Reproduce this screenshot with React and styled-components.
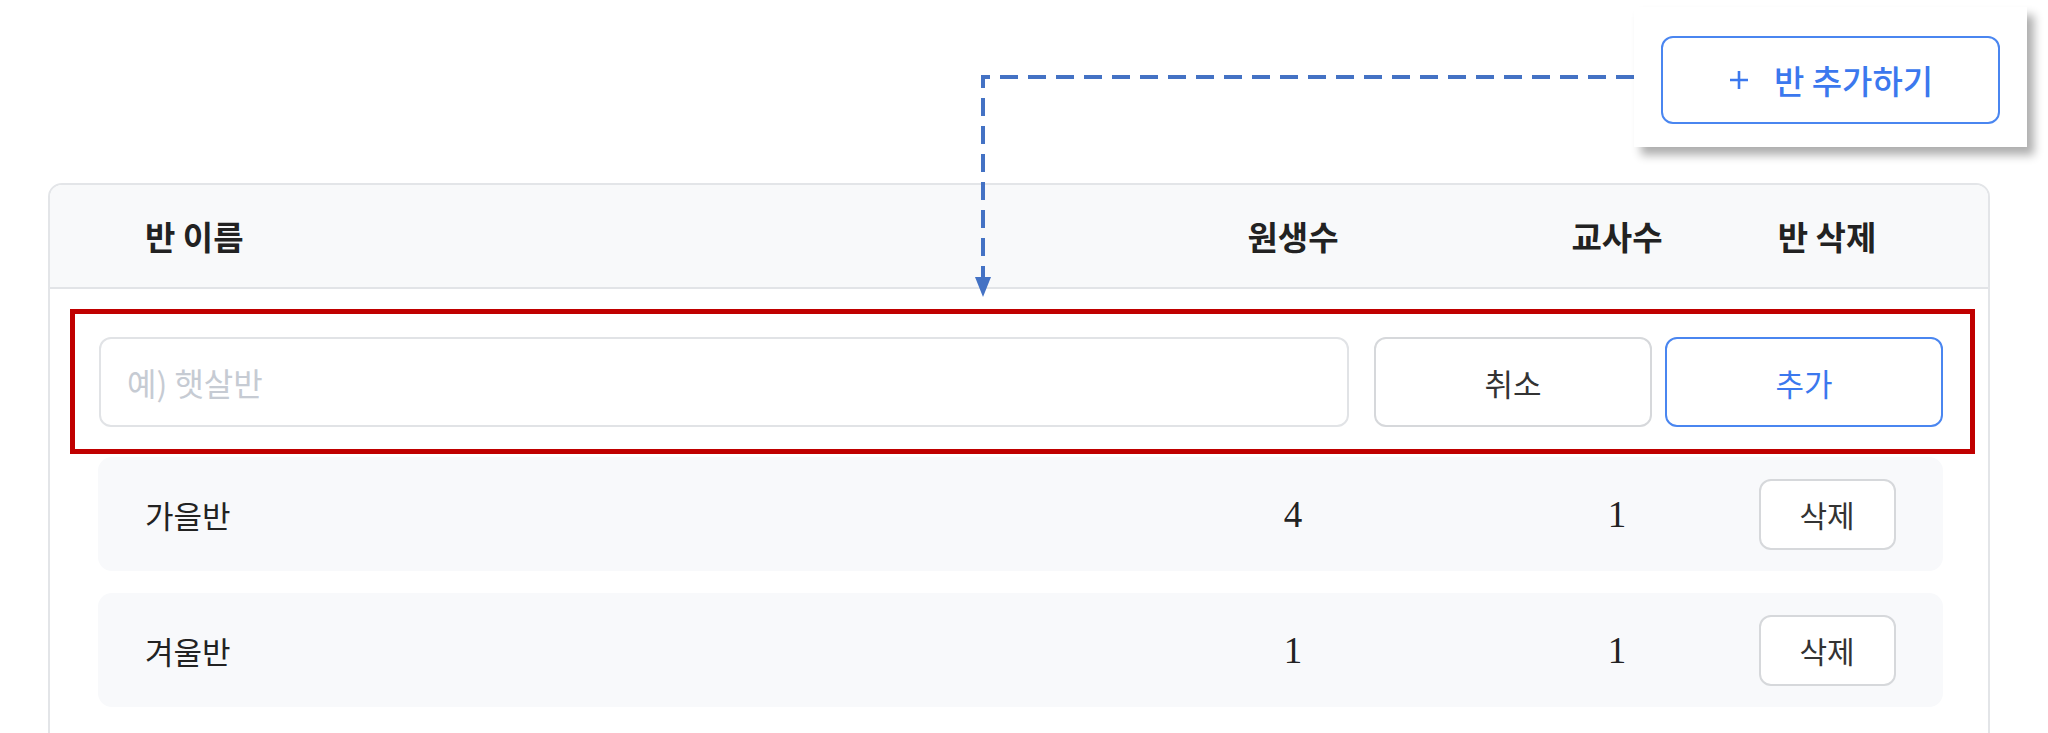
import React from 'react';
import styled, { createGlobalStyle } from 'styled-components';

const GlobalStyle = createGlobalStyle`
  html, body {
    margin: 0;
    padding: 0;
    background: #ffffff;
  }
  body {
    font-family: "Noto Sans CJK KR", "Noto Sans", sans-serif;
    color: #222222;
  }
`

const Page = styled.div`
  position: relative;
  width: 2048px;
  height: 733px;
  overflow: hidden;
  padding-top: 183px;
  box-sizing: border-box;
`

const TableCard = styled.div`
  margin-left: 48px;
  width: 1942px;
  height: 620px;
  box-sizing: border-box;
  border: 2px solid #e3e5e8;
  border-radius: 14px;
  overflow: hidden;
`

const HeadRow = styled.div`
  display: grid;
  grid-template-columns: 1fr 460px 188px 232px;
  align-items: center;
  height: 102px;
  padding: 0 45px 0 95px;
  background: #f8f9fa;
  border-bottom: 2px solid #e2e4e7;
  font-size: 33px;
  font-weight: 700;
  color: #222;
`

const HeadCell = styled.div`
  text-align: ${p => (p.$center ? 'center' : 'left')};
`

const Body = styled.div`
  padding: 20px 13px 0 20px;
`

// red annotation frame around the add-row
const Highlight = styled.div`
  display: flex;
  align-items: center;
  gap: 13px;
  border: 5px solid #c00000;
  padding: 23px 27px 22px 24px;
`

const NameInput = styled.input`
  flex: 1;
  height: 90px;
  margin-right: 12px;
  box-sizing: border-box;
  border: 2px solid #e1e3e6;
  border-radius: 12px;
  padding: 0 26px;
  font-family: "Noto Sans CJK KR", sans-serif;
  font-size: 32px;
  color: #222;
  outline: none;
  &::placeholder {
    color: #c6cbd3;
  }
`

const ActionButton = styled.button`
  width: 278px;
  height: 90px;
  box-sizing: border-box;
  background: #fff;
  border: 2px solid ${p => (p.$primary ? '#4a86f0' : '#d6d8db')};
  border-radius: 12px;
  font-family: "Noto Sans CJK KR", sans-serif;
  font-size: 31px;
  color: ${p => (p.$primary ? '#3b78ee' : '#333')};
  cursor: pointer;
`

const List = styled.div`
  display: flex;
  flex-direction: column;
  gap: 22px;
  padding: 3px 32px 0 28px;
`

const Row = styled.div`
  display: grid;
  grid-template-columns: 1fr 460px 188px 232px;
  align-items: center;
  height: 114px;
  padding-left: 47px;
  background: #f8f9fb;
  border-radius: 14px;
  font-size: 31px;
`

const Count = styled.div`
  text-align: center;
  font-family: "Liberation Serif", serif;
  font-size: 37px;
  color: #222;
`

const DeleteCell = styled.div`
  display: flex;
  justify-content: center;
`

const DeleteButton = styled.button`
  width: 137px;
  height: 71px;
  box-sizing: border-box;
  background: #fff;
  border: 2px solid #d6d8db;
  border-radius: 12px;
  font-family: "Noto Sans CJK KR", sans-serif;
  font-size: 30px;
  color: #333;
`

// callout card with the zoomed "add" button
const Callout = styled.div`
  position: absolute;
  left: 1634px;
  top: 7px;
  width: 393px;
  height: 140px;
  box-sizing: border-box;
  padding: 29px 27px 0 27px;
  background: #fff;
  box-shadow: 7px 8px 9px rgba(0, 0, 0, 0.32);
`

const AddClassButton = styled.button`
  display: flex;
  align-items: center;
  justify-content: center;
  gap: 24px;
  width: 339px;
  height: 88px;
  box-sizing: border-box;
  background: #fff;
  border: 2px solid #4a86f0;
  border-radius: 12px;
  font-family: "Noto Sans CJK KR", sans-serif;
  font-size: 33px;
  font-weight: 500;
  color: #3b78ee;
  padding: 0;
`

const Arrow = styled.svg`
  position: absolute;
  left: 0;
  top: 0;
  pointer-events: none;
`

const classes = [
  { id: 1, name: '가을반', kids: 4, teachers: 1 },
  { id: 2, name: '겨울반', kids: 1, teachers: 1 },
];

export default function App() {
  return (
    <>
      <GlobalStyle />
      <Page>
        <TableCard>
          <HeadRow>
            <HeadCell>반 이름</HeadCell>
            <HeadCell $center>원생수</HeadCell>
            <HeadCell $center>교사수</HeadCell>
            <HeadCell $center>반 삭제</HeadCell>
          </HeadRow>
          <Body>
            <Highlight>
              <NameInput placeholder="예) 햇살반" />
              <ActionButton>취소</ActionButton>
              <ActionButton $primary>추가</ActionButton>
            </Highlight>
            <List>
              {classes.map(c => (
                <Row key={c.id}>
                  <div>{c.name}</div>
                  <Count>{c.kids}</Count>
                  <Count>{c.teachers}</Count>
                  <DeleteCell>
                    <DeleteButton>삭제</DeleteButton>
                  </DeleteCell>
                </Row>
              ))}
            </List>
          </Body>
        </TableCard>

        <Arrow width="2048" height="733">
          <path
            d="M1634 77 H983 V279"
            fill="none"
            stroke="#4472c4"
            strokeWidth="4"
            strokeDasharray="18 10"
          />
          <polygon points="975,277 991,277 983,297" fill="#4472c4" />
        </Arrow>

        <Callout>
          <AddClassButton>
            <svg width="22" height="22" viewBox="0 0 22 22">
              <path d="M11 2 V20 M2 11 H20" stroke="#3b78ee" strokeWidth="2.6" />
            </svg>
            <span>반 추가하기</span>
          </AddClassButton>
        </Callout>
      </Page>
    </>
  );
}
